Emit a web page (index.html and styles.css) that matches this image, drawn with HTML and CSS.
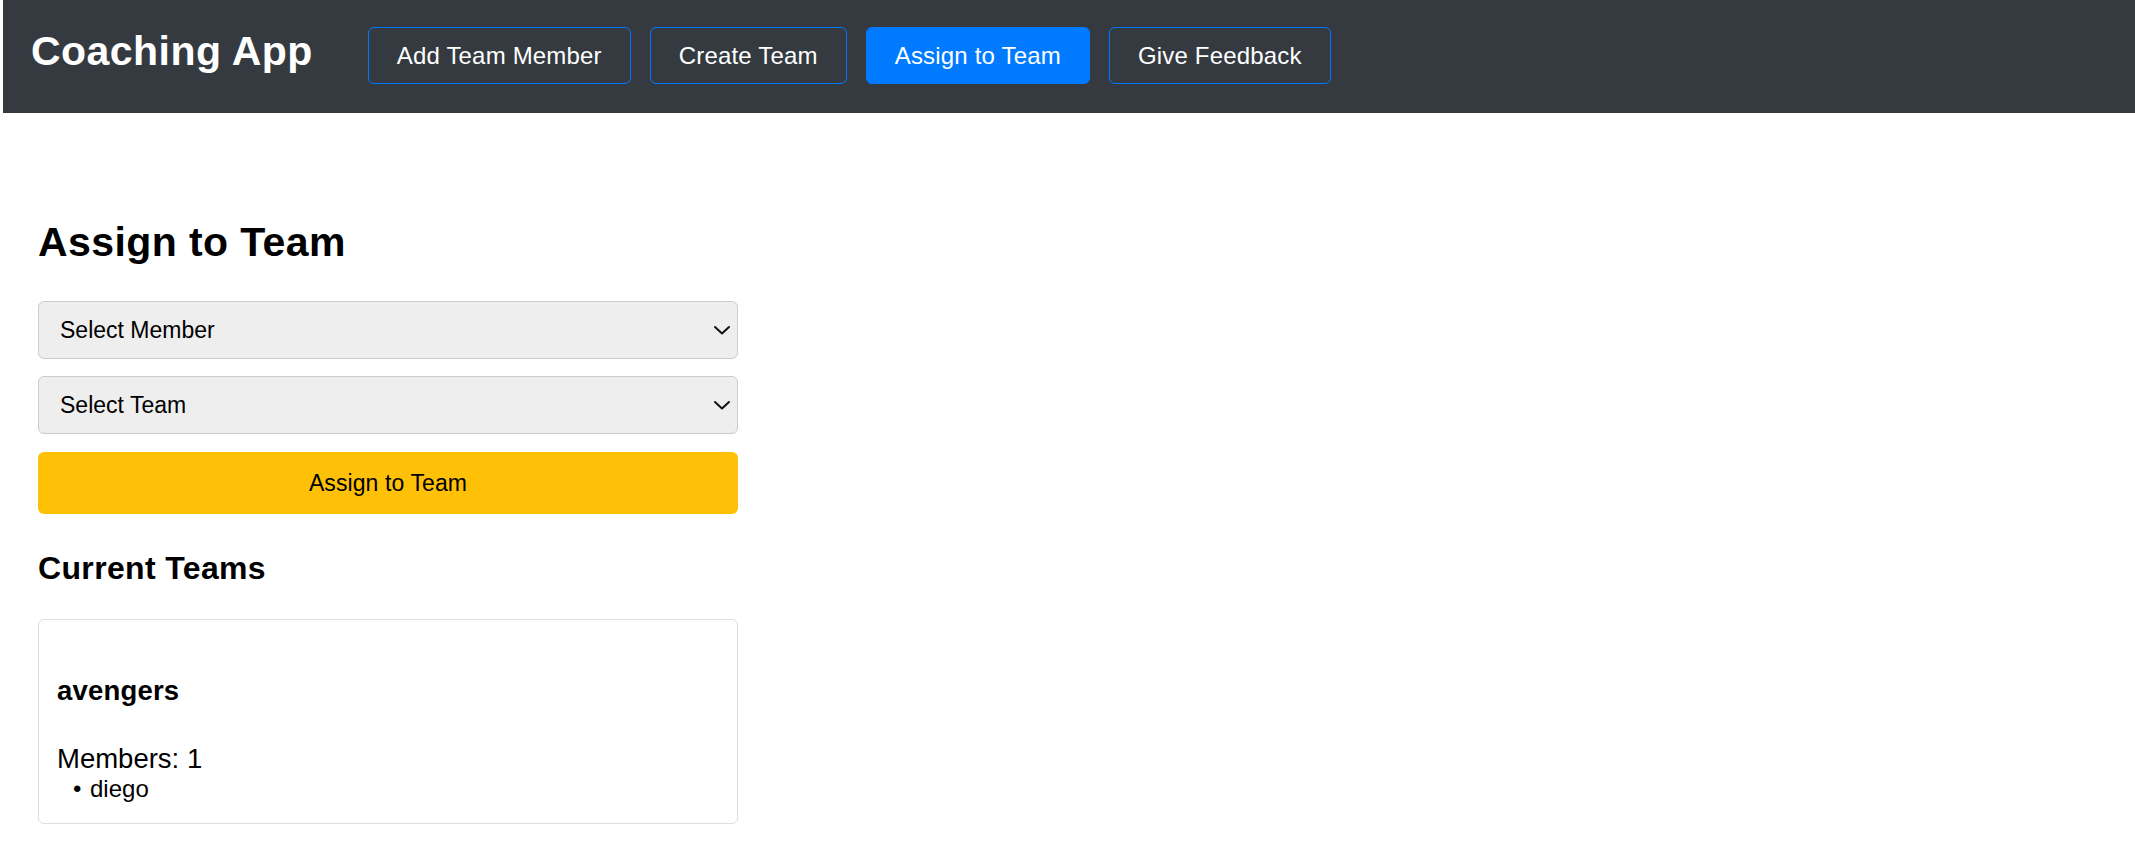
FILE: index.html
```html
<!DOCTYPE html>
<html lang="en">
<head>
<meta charset="utf-8">
<title>Coaching App</title>
<link rel="stylesheet" href="styles.css">
</head>
<body>
<div class="app">
  <header class="topbar">
    <h1 class="brand">Coaching App</h1>
    <nav class="nav">
      <button class="nav-btn">Add Team Member</button>
      <button class="nav-btn">Create Team</button>
      <button class="nav-btn active">Assign to Team</button>
      <button class="nav-btn">Give Feedback</button>
    </nav>
  </header>
  <main class="main">
    <h2 class="page-title">Assign to Team</h2>
    <div class="form">
      <div class="select-wrap">
        <select class="select">
          <option>Select Member</option>
          <option>diego</option>
        </select>
        <svg class="chevron" width="18" height="10" viewBox="0 0 18 10"><path d="M2 2 L9 8.5 L16 2" fill="none" stroke="#111" stroke-width="2" stroke-linecap="round" stroke-linejoin="round"/></svg>
      </div>
      <div class="select-wrap">
        <select class="select">
          <option>Select Team</option>
          <option>avengers</option>
        </select>
        <svg class="chevron" width="18" height="10" viewBox="0 0 18 10"><path d="M2 2 L9 8.5 L16 2" fill="none" stroke="#111" stroke-width="2" stroke-linecap="round" stroke-linejoin="round"/></svg>
      </div>
      <button class="submit">Assign to Team</button>
    </div>
    <h3 class="section-title">Current Teams</h3>
    <div class="card">
      <h4 class="team-name">avengers</h4>
      <p class="members">Members: 1</p>
      <ul class="member-list">
        <li>diego</li>
      </ul>
    </div>
  </main>
</div>
</body>
</html>
```
FILE: styles.css
```css
* { box-sizing: border-box; }
html, body { margin: 0; padding: 0; background: #fff; }
body {
  font-family: "Liberation Sans", Arial, sans-serif;
  color: #000;
}
.app { margin-left: 3px; }

.topbar {
  display: flex;
  align-items: center;
  background: #343a40;
  padding: 27px 28px 29px;
  height: 113px;
}
.brand {
  margin: 0 55px 9px 0;
  font-size: 41px;
  font-weight: bold;
  letter-spacing: 0.45px;
  color: #fff;
  line-height: normal;
}
.nav { display: flex; gap: 19px; }
.nav-btn {
  font-family: "Liberation Sans", Arial, sans-serif;
  font-size: 24px;
  letter-spacing: 0.18px;
  color: #fff;
  background: transparent;
  border: 1px solid #007bff;
  border-radius: 6px;
  height: 57px;
  padding: 0 28px;
  cursor: pointer;
}
.nav-btn.active { background: #007bff; }

.main { padding: 106px 35px 40px; }
.page-title {
  font-size: 41px;
  font-weight: bold;
  letter-spacing: 0.4px;
  margin: 0 0 35px;
  line-height: normal;
}
.form { width: 700px; display: flex; flex-direction: column; }
.select-wrap { position: relative; margin-bottom: 17px; }
.select-wrap + .select-wrap { margin-bottom: 18px; }
.select {
  display: block;
  width: 100%;
  height: 58px;
  -webkit-appearance: none;
  appearance: none;
  background: #eeeeee;
  border: 1px solid #cccccc;
  border-radius: 6px;
  padding: 0 40px 0 21px;
  font-family: "Liberation Sans", Arial, sans-serif;
  font-size: 23px;
  color: #000;
}
.chevron {
  position: absolute;
  right: 7px;
  top: 50%;
  transform: translateY(-50%);
  pointer-events: none;
}
.submit {
  height: 62px;
  width: 100%;
  background: #ffc107;
  border: none;
  border-radius: 6px;
  font-family: "Liberation Sans", Arial, sans-serif;
  font-size: 23px;
  letter-spacing: 0.1px;
  color: #000;
  cursor: pointer;
}
.section-title {
  font-size: 32px;
  font-weight: bold;
  letter-spacing: 0.35px;
  margin: 36px 0 32px;
  line-height: normal;
}
.card {
  width: 700px;
  border: 1px solid #dddddd;
  border-radius: 6px;
  padding: 18px 18px 20px;
}
.team-name {
  font-size: 27.5px;
  font-weight: bold;
  letter-spacing: 0.2px;
  margin: 36.5px 0;
  line-height: normal;
}
.members {
  font-size: 27.5px;
  margin: 0;
  line-height: normal;
}
.member-list {
  list-style: none;
  margin: 0;
  padding: 0 0 0 16px;
  font-size: 24px;
  line-height: normal;
}
.member-list li::before {
  content: "•";
  display: inline-block;
  width: 17px;
}
```
